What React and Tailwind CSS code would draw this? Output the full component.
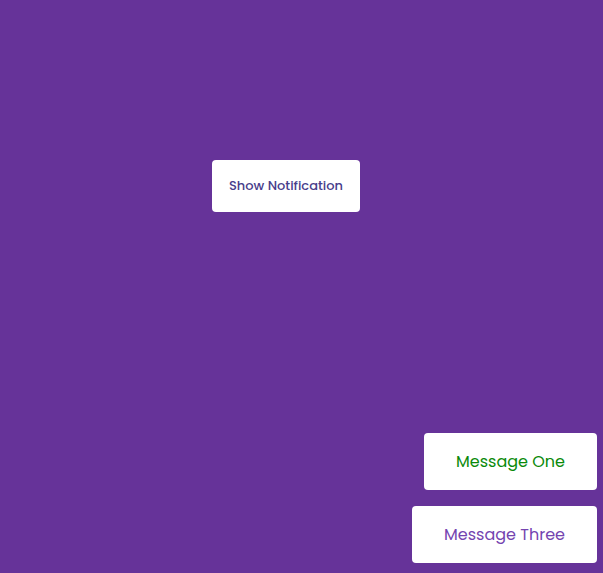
export default function App() {
  const toasts = [
    { id: 1, text: "Message One", color: "text-[#0a8a0a]" },
    { id: 3, text: "Message Three", color: "text-[#7444b0]" },
  ];

  return (
    <div
      className="min-h-[573px] bg-[#663399] pl-[212px] pt-[160px]"
      style={{ fontFamily: "Poppins, 'Open Sans', sans-serif" }}
    >
      <button className="h-[52px] w-[148px] rounded-[4px] bg-white text-[13px] font-medium text-[#483d8b]">
        Show Notification
      </button>

      <div className="fixed bottom-[10px] right-[6px] flex flex-col items-end gap-4">
        {toasts.map((t) => (
          <div
            key={t.id}
            className={`flex h-[57px] items-center rounded-[4px] bg-white px-8 text-[16px] ${t.color}`}
          >
            {t.text}
          </div>
        ))}
      </div>
    </div>
  );
}
